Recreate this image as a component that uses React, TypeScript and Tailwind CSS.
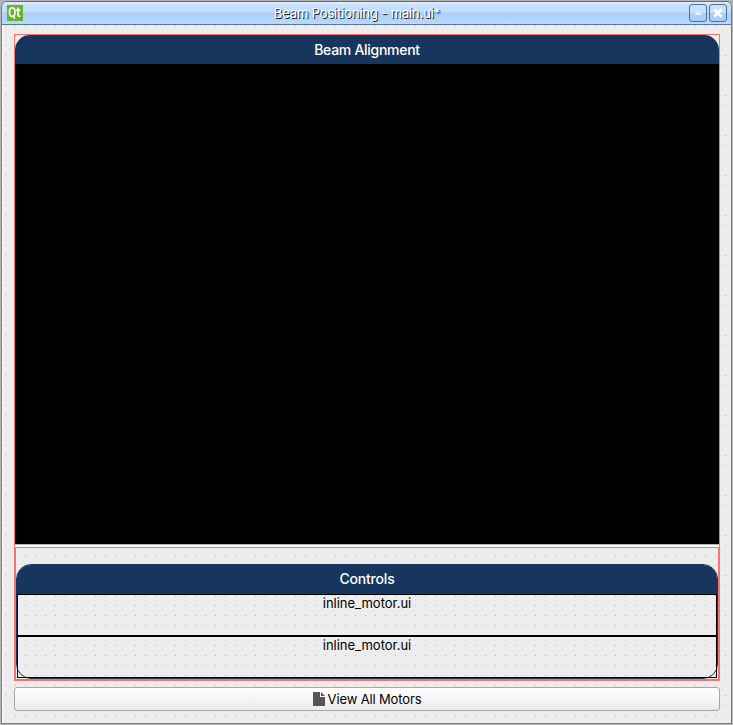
import React from "react";

function TitleBar() {
  return (
    <header className="grid h-[23px] shrink-0 grid-cols-[1fr_auto_1fr] items-center border-b border-[#62799b] bg-[linear-gradient(#e2f0ff_0,#c7e1fe_3px,#bedcfd_10px,#a8cff8_11px,#b8dafd_22px)] pl-[5px] pr-1">
      <svg width="16" height="16" viewBox="0 0 16 16" className="shrink-0">
        <rect width="16" height="16" fill="#67b32e" />
        <path
          d="M5.2 2.8c-2 0-2.7 1.6-2.7 4.3s.7 4.4 2.7 4.4 2.8-1.7 2.8-4.4-.8-4.3-2.8-4.3zM6 11l1.8 2.4M11 2.5v7.5q0 1.5 2.4 1.2M9 5.2h4.4"
          fill="none"
          stroke="#fff"
          strokeWidth="1.7"
        />
      </svg>
      <h1 className="mr-[20px] text-[13px] font-normal leading-[22px] tracking-[-0.14px] text-white [text-shadow:1px_1px_0_#222]">
        Beam Positioning - main.ui*
      </h1>
      <div className="flex justify-end gap-[2px]">
        <button className="flex h-[18px] w-[18px] items-center justify-center rounded-[3px] border border-[#586f92] bg-[linear-gradient(#c6e0fd_50%,#a8cff8_50%)]">
          <svg width="16" height="16" viewBox="0 0 16 16">
            <path d="M4 10L8 6l4 4z" fill="#e4f1ff" />
          </svg>
        </button>
        <button className="flex h-[18px] w-[18px] items-center justify-center rounded-[3px] border border-[#586f92] bg-[linear-gradient(#c6e0fd_50%,#a8cff8_50%)]">
          <svg width="16" height="16" viewBox="0 0 16 16">
            <path d="M4.2 4.2l7.6 7.6M11.8 4.2l-7.6 7.6" stroke="#fff" strokeWidth="2.8" />
          </svg>
        </button>
      </div>
    </header>
  );
}

function MotorRow() {
  return (
    <div className="h-[42px] border border-black text-center text-[13px] leading-4 tracking-[0px]">
      inline_motor.ui
    </div>
  );
}

function Controls() {
  return (
    <section className="h-[115px] rounded-[15px] border border-[#17365d]">
      <h2 className="h-[29px] rounded-t-[14px] bg-[#17365d] text-center text-[14px] font-medium leading-[28px] tracking-[-0.2px] text-white">
        Controls
      </h2>
      <MotorRow />
      <MotorRow />
    </section>
  );
}

export default function App() {
  return (
    <div className="h-[725px] w-[733px] bg-[#b4b4b4] pl-px pt-px font-['Inter','Roboto',sans-serif] text-black">
      <div className="flex h-[723px] w-[731px] flex-col overflow-hidden rounded-t-[6px] border border-[#7c7c7c] border-t-[#576c8b] bg-[#ededed]">
        <TitleBar />
        <main className="flex flex-1 flex-col gap-[6px] border-l border-white bg-[#ededed] bg-[image:radial-gradient(circle_at_0.5px_0.5px,#b8b8b8_0.6px,transparent_0.7px)] bg-[length:10px_10px] bg-[position:2px_0px] pl-[11px] pt-[9px]">
          <div className="h-[647px] w-[706px] border border-[#fb7370]">
            <h2 className="h-[29px] rounded-t-[15px] bg-[#17365d] text-center text-[14px] font-medium leading-[29px] tracking-[-0.28px] text-white">
              Beam Alignment
            </h2>
            <div className="h-[480px] bg-black" />
            <div className="h-[3px] border-t border-[#b4b4b4] bg-[#fafafa]" />
            <div className="h-[133px] border border-[#fb7370] pt-4">
              <Controls />
            </div>
          </div>
          <button className="flex h-[24px] w-[706px] items-center justify-center gap-[3px] rounded-[3px] border border-[#a6a6a6] bg-[linear-gradient(#ffffff,#ebebeb)] text-[13px] tracking-[-0.14px]">
            <svg width="12" height="14" viewBox="0 0 12 14" fill="#555">
              <path d="M0 0h7v5h5v9H0zM8 0l4 4H8z" />
            </svg>
            <span className="pt-[2px]">View All Motors</span>
          </button>
        </main>
      </div>
    </div>
  );
}
